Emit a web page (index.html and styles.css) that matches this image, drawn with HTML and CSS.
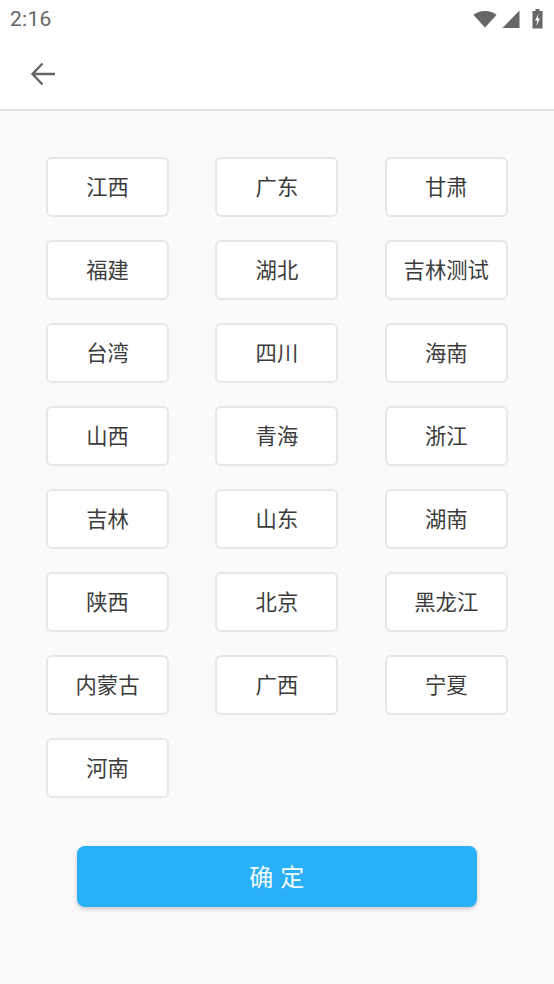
FILE: index.html
```html
<!DOCTYPE html>
<html lang="zh">
<head>
<meta charset="utf-8">
<title>省份</title>
<link rel="stylesheet" href="styles.css">
</head>
<body>
<div class="page">
  <header class="top">
    <div class="status">
      <span class="time">2:16</span>
      <div class="status-icons">
        <svg class="wifi" width="24" height="18" viewBox="0 0 24 18"><path d="M0.500 5C3.500 2.300 7.500 1 12 1s8.500 1.300 11.500 4L12 17.500z" fill="#666"/></svg>
        <svg class="signal" width="18" height="18" viewBox="0 0 18 18"><path d="M17.500 0.500V18H0.500z" fill="#666"/></svg>
        <svg class="battery" width="11" height="20" viewBox="0 0 11 20"><path d="M3.500 0h4V2h3V19.500H0.500V2h3z" fill="#666"/><path d="M6.500 4.500L3 11.500h2.300L4.300 17 8 9.500H5.700z" fill="#fff"/></svg>
      </div>
    </div>
    <div class="toolbar">
      <svg class="back" width="28" height="28" viewBox="0 0 28 28"><path d="M26 14H4M13.500 3.500L3.500 14l10 10.500" fill="none" stroke="#666" stroke-width="2.400"/></svg>
    </div>
  </header>
  <main class="content">
    <div class="grid">
      <div class="item">江西</div>
      <div class="item">广东</div>
      <div class="item">甘肃</div>
      <div class="item">福建</div>
      <div class="item">湖北</div>
      <div class="item">吉林测试</div>
      <div class="item">台湾</div>
      <div class="item">四川</div>
      <div class="item">海南</div>
      <div class="item">山西</div>
      <div class="item">青海</div>
      <div class="item">浙江</div>
      <div class="item">吉林</div>
      <div class="item">山东</div>
      <div class="item">湖南</div>
      <div class="item">陕西</div>
      <div class="item">北京</div>
      <div class="item">黑龙江</div>
      <div class="item">内蒙古</div>
      <div class="item">广西</div>
      <div class="item">宁夏</div>
      <div class="item">河南</div>
    </div>
    <button class="confirm" type="button">确 定</button>
  </main>
</div>
</body>
</html>
```
FILE: styles.css
```css
* { box-sizing: border-box; }
html, body { margin: 0; height: 100%; }
body {
  font-family: "Roboto", "Noto Sans CJK SC", sans-serif;
  background: #fafafa;
  overflow: hidden;
}
.page { width: 554px; height: 984px; display: flex; flex-direction: column; }
.top { background: #fff; height: 111px; border-bottom: 2px solid #e4e4e4; flex: none; }
.status {
  height: 38px;
  padding: 0 11px 0 10px;
  display: flex;
  align-items: center;
  justify-content: space-between;
}
.time { font-size: 21px; color: #666; letter-spacing: 0.3px; }
.status-icons { display: flex; align-items: center; gap: 5px; }
.battery { margin-left: 7px; }
.toolbar { height: 71px; padding: 0 0 0 29px; display: flex; align-items: center; }
.back { display: block; }
.content { flex: 1; padding: 46px 46px 0; display: flex; flex-direction: column; }
.grid {
  display: grid;
  grid-template-columns: repeat(3, 123px);
  grid-auto-rows: 60px;
  column-gap: 46.4px;
  row-gap: 23px;
}
.item {
  background: #fff;
  border: 2px solid #e6e6e6;
  border-radius: 6px;
  display: flex;
  align-items: center;
  justify-content: center;
  padding-bottom: 4px;
  font-size: 21.33px;
  color: #3c3c3c;
}
.confirm {
  align-self: center;
  width: 400px;
  height: 61px;
  margin-top: 48px;
  padding: 0 0 2px;
  border: 0;
  border-radius: 8px;
  background: #2ab0f8;
  color: #f4fbff;
  font-family: inherit;
  font-size: 24px;
  letter-spacing: 0.5px;
  box-shadow: 0 2px 4px rgba(0, 0, 0, 0.2);
}
```
